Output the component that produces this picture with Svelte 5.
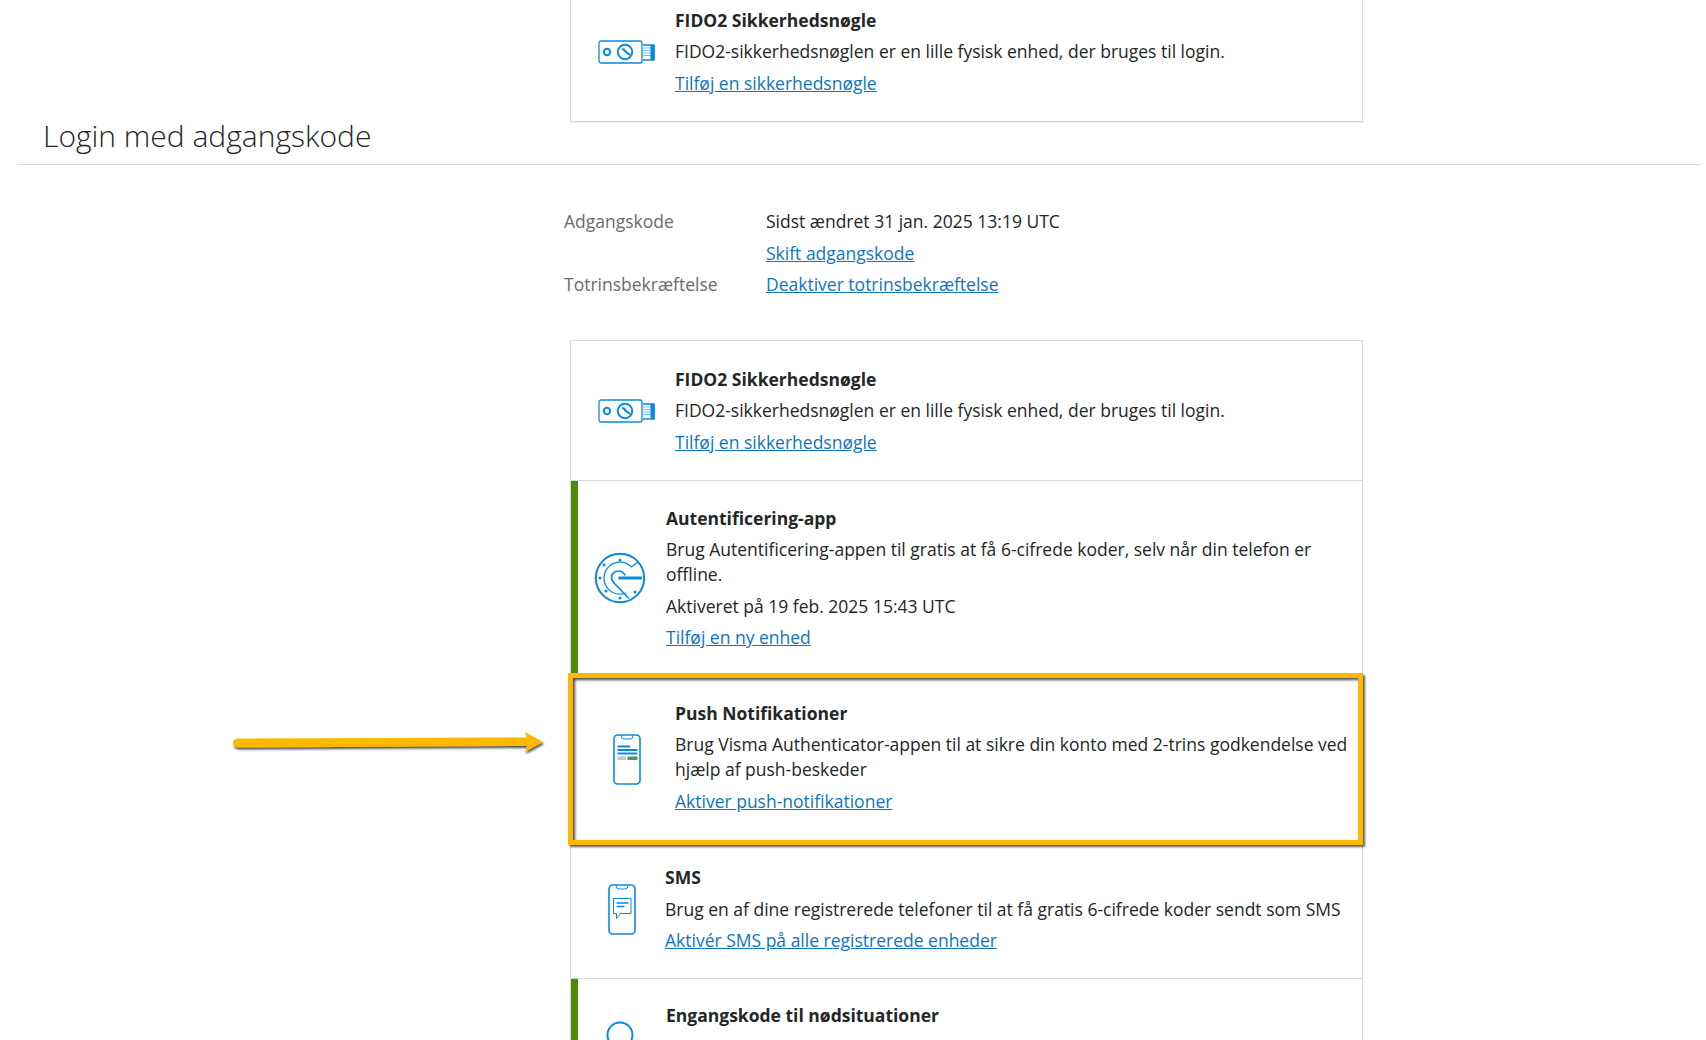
<script>
  const fidoDesc = 'FIDO2-sikkerhedsnøglen er en lille fysisk enhed, der bruges til login.';
</script>

{#snippet fidoIcon()}
  <svg class="ic-fido" viewBox="0 0 58 24" width="58" height="24" fill="none" stroke="#0a8adf">
    <rect x="1" y="1" width="43" height="22" rx="2" stroke-width="1.300"/>
    <circle cx="9" cy="12" r="3.200" stroke-width="2"/>
    <circle cx="27" cy="12" r="7.200" stroke-width="2"/>
    <path d="M24 9.500a2.200 2.200 0 0 1 3 1.500l5 4" stroke-width="2.200"/>
    <path d="M45 5h11v15h-11" stroke-width="1.500"/>
    <path d="M45 8h8M45 10.500h8M45 13h8M45 15.500h8" stroke-width="1" stroke="#7cc0ee"/>
    <rect x="52.500" y="5" width="4" height="15" fill="#0a8adf" stroke="none"/>
  </svg>
{/snippet}

{#snippet fidoRow()}
  <div class="row fido">
    <div class="icon">{@render fidoIcon()}</div>
    <div class="body">
      <h3>FIDO2 Sikkerhedsnøgle</h3>
      <p>{fidoDesc}</p>
      <a href="#a">Tilføj en sikkerhedsnøgle</a>
    </div>
  </div>
{/snippet}

<div class="page">
  <div class="card top-card">
    {@render fidoRow()}
  </div>

  <h2>Login med adgangskode</h2>

  <dl class="info">
    <dt>Adgangskode</dt>
    <dd>Sidst ændret 31 jan. 2025 13:19 UTC</dd>
    <dt></dt>
    <dd><a href="#a">Skift adgangskode</a></dd>
    <dt>Totrinsbekræftelse</dt>
    <dd><a href="#a">Deaktiver totrinsbekræftelse</a></dd>
  </dl>

  <div class="card main-card">
    {@render fidoRow()}

    <div class="row active auth">
      <div class="icon">
        <svg viewBox="0 0 52 52" width="52" height="52" fill="none" stroke="#0a8adf">
          <circle cx="26" cy="26" r="24.200" stroke-width="2"/>
          <path d="M44 10L37.500 15A16 16 0 1 0 32 41" stroke-width="1.300"/>
          <path d="M31 23.500C29.500 20 27 19 24.500 19C20.500 19 17.500 22 17.500 25.500C17.500 28 19 30 21 32L35 46.500" stroke-width="1.700"/>
          <path d="M24.500 26H48" stroke-width="3"/>
          <g fill="#0a8adf" stroke="none">
            <circle cx="26" cy="8" r="1.500"/><circle cx="10" cy="13" r="1.500"/>
            <circle cx="6" cy="26" r="1.500"/><circle cx="12" cy="39" r="1.500"/>
            <circle cx="26" cy="46" r="1.500"/><circle cx="41" cy="40" r="1.500"/>
          </g>
        </svg>
      </div>
      <div class="body">
        <h3>Autentificering-app</h3>
        <p>Brug Autentificering-appen til gratis at få 6-cifrede koder, selv når din telefon er offline.</p>
        <p>Aktiveret på 19 feb. 2025 15:43 UTC</p>
        <a href="#a">Tilføj en ny enhed</a>
      </div>
    </div>

    <div class="row push">
      <div class="icon">
        <svg viewBox="0 0 28 51" width="28" height="51" fill="none" stroke="#0a8adf">
          <rect x="1" y="1" width="26" height="49" rx="3.500" stroke-width="1.600"/>
          <path d="M8 1.500q0 3.500 3 3.500h6q3 0 3-3.500" stroke-width="1"/>
          <path d="M4.500 12.500h12.500M4.500 16h20M4.500 19.500h20" stroke-width="2"/>
          <rect x="4.500" y="22.500" width="8.500" height="3.500" fill="#c3c6cc" stroke="none"/>
          <rect x="14.500" y="22.500" width="10" height="3.500" fill="#4f9a4f" stroke="none"/>
        </svg>
      </div>
      <div class="body">
        <h3>Push Notifikationer</h3>
        <p>Brug Visma Authenticator-appen til at sikre din konto med 2-trins godkendelse ved hjælp af push-beskeder</p>
        <a href="#a">Aktiver push-notifikationer</a>
      </div>
      <div class="highlight"></div>
    </div>

    <div class="row sms">
      <div class="icon">
        <svg viewBox="0 0 28 51" width="28" height="51" fill="none" stroke="#0a8adf">
          <rect x="1" y="1" width="26" height="49" rx="3.500" stroke-width="1.600"/>
          <path d="M8 1.500q0 3.500 3 3.500h6q3 0 3-3.500" stroke-width="1"/>
          <path d="M5.500 14.500h17.500v15h-10.500l-4 5v-5h-3z" stroke-width="1"/>
          <path d="M8.500 19h12M8.500 22.500h8" stroke-width="1.600"/>
        </svg>
      </div>
      <div class="body">
        <h3>SMS</h3>
        <p>Brug en af dine registrerede telefoner til at få gratis 6-cifrede koder sendt som SMS</p>
        <a href="#a">Aktivér SMS på alle registrerede enheder</a>
      </div>
    </div>

    <div class="row active emergency">
      <div class="icon">
        <svg viewBox="0 0 52 52" width="52" height="52" fill="none" stroke="#0a8adf">
          <circle cx="26" cy="26" r="12.500" stroke-width="2"/>
        </svg>
      </div>
      <div class="body">
        <h3>Engangskode til nødsituationer</h3>
        <p>&nbsp;</p>
      </div>
    </div>
  </div>

  <svg class="arrow" viewBox="0 0 320 24" width="320" height="24">
    <defs>
      <filter id="arrow-shadow" x="-5%" y="-40%" width="110%" height="200%">
        <feDropShadow dx="1" dy="2" stdDeviation="1" flood-color="#222" flood-opacity="0.8"/>
      </filter>
    </defs>
    <path filter="url(#arrow-shadow)" fill="#fdb900"
      d="M8 7.500 L 297 6.500 L 295 1 L 313 11 L 295 21 L 297 15 L 8 16.500 Q 3 16 3 12 Q 3 8 8 7.500Z"/>
  </svg>
</div>

<style>
  :global(body) {
    margin: 0;
    background: #fff;
  }
  .page {
    position: relative;
    width: 1706px;
    height: 1040px;
    overflow: hidden;
    font-family: "Open Sans", "Liberation Sans", sans-serif;
    font-size: 17.5px;
    line-height: 25px;
    color: #252626;
  }
  a {
    color: #0f75bd;
    text-decoration: underline;
    display: block;
  }
  h3 {
    margin: 0;
    font-size: 17.5px;
    font-weight: 700;
    line-height: 25px;
  }
  p {
    margin: 0;
  }
  .card {
    width: 793px;
    margin-left: 570px;
    box-sizing: border-box;
    border: 1px solid #d9d9d9;
    background: #fff;
  }
  .top-card {
    margin-top: -19px;
    box-shadow: 0 1px 1px #eee;
  }
  h2 {
    margin: -8px 6px 0 18px;
    padding: 0 0 6px 25px;
    height: 44px;
    font-size: 30px;
    font-weight: 300;
    line-height: 44px;
    border-bottom: 1px solid #d9d9d9;
  }
  .info {
    display: grid;
    grid-template-columns: 202px 1fr;
    row-gap: 6.500px;
    margin: 44px 0 0 564px;
  }
  dt {
    color: #6b6b6b;
  }
  dd {
    margin: 0;
  }
  .main-card {
    margin-top: 43px;
    height: 760px;
  }
  .row {
    position: relative;
    display: flex;
    align-items: center;
    box-sizing: border-box;
    border-bottom: 1px solid #d9d9d9;
    padding-right: 10px;
  }
  .icon {
    display: flex;
    justify-content: center;
    flex: none;
  }
  .icon svg {
    display: block;
  }
  .body {
    display: flex;
    flex-direction: column;
    gap: 6.500px;
  }
  .fido {
    height: 140px;
  }
  .top-card .fido {
    height: 139px;
    border-bottom: 0;
  }
  .fido .icon {
    width: 104px;
    padding: 0 0 0 8px;
    box-sizing: border-box;
  }
  .active {
    border-left: 7px solid #4f8a00;
  }
  .auth {
    height: 195px;
  }
  .active .icon {
    width: 88px;
    padding-right: 4px;
    box-sizing: border-box;
  }
  .push {
    height: 170px;
    padding-bottom: 7px;
  }
  .push .icon {
    width: 104px;
    padding: 4px 0 0 8px;
    box-sizing: border-box;
  }
  .sms {
    height: 133px;
    padding-bottom: 6px;
  }
  .sms .icon {
    width: 94px;
    padding-left: 7px;
    box-sizing: border-box;
  }
  .emergency {
    align-items: flex-start;
    padding-top: 24px;
    border-bottom: 0;
  }
  .emergency .icon {
    padding-top: 6px;
  }
  .highlight {
    position: absolute;
    inset: -3px -1px 0 -3px;
    border: 5px solid #fdb900;
    box-sizing: border-box;
    box-shadow: 2px 2px 2px rgba(30, 30, 30, 0.7), inset 2px 2px 3px rgba(30, 30, 30, 0.8);
    pointer-events: none;
  }
  .arrow {
    position: absolute;
    left: 230px;
    top: 731px;
  }
</style>
